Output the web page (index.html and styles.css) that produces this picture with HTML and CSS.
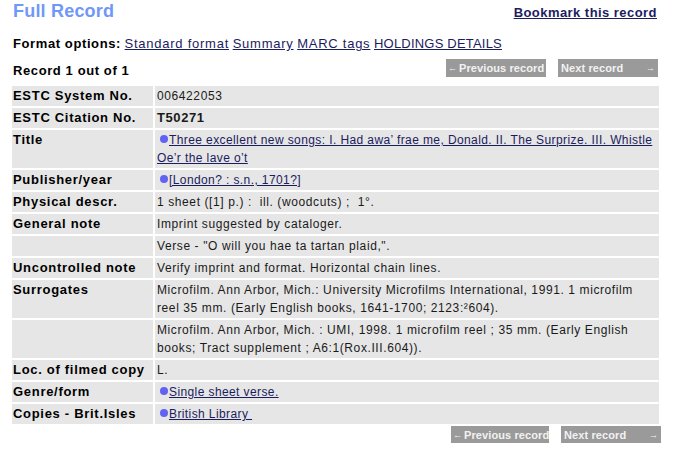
FILE: index.html
```html
<!DOCTYPE html>
<html>
<head>
<meta charset="utf-8">
<link rel="stylesheet" href="styles.css">
</head>
<body>
<div class="page">
  <div class="header">
    <h1 class="title">Full Record</h1>
    <a class="bookmark" href="#">Bookmark this record</a>
  </div>
  <div class="formats">
    <span class="formats-label">Format options:</span>
    <a href="#">Standard format</a>
    <a href="#">Summary</a>
    <a href="#">MARC tags</a>
    <a class="caps" href="#">HOLDINGS DETAILS</a>
  </div>
  <div class="navrow">
    <span class="count">Record 1 out of 1</span>
    <div class="navbtns">
      <a class="btn prev" href="#"><span class="arr">&larr;</span>Previous record</a>
      <a class="btn next" href="#">Next record<span class="arr">&rarr;</span></a>
    </div>
  </div>
  <table class="record">
    <tr><th>ESTC System No.</th><td>006422053</td></tr>
    <tr><th>ESTC Citation No.</th><td class="strong">T50271</td></tr>
    <tr><th>Title</th><td><span class="dot"></span><a href="#">Three excellent new songs: I. Had awa’ frae me, Donald. II. The Surprize. III. Whistle Oe’r the lave o’t</a></td></tr>
    <tr><th>Publisher/year</th><td><span class="dot"></span><a href="#">[London? : s.n., 1701?]</a></td></tr>
    <tr><th>Physical descr.</th><td>1 sheet ([1] p.) :&nbsp; ill. (woodcuts) ;&nbsp; 1°.</td></tr>
    <tr><th>General note</th><td>Imprint suggested by cataloger.</td></tr>
    <tr><th></th><td>Verse - "O will you hae ta tartan plaid,".</td></tr>
    <tr><th>Uncontrolled note</th><td>Verify imprint and format. Horizontal chain lines.</td></tr>
    <tr><th>Surrogates</th><td>Microfilm. Ann Arbor, Mich.: University Microfilms International, 1991. 1 microfilm reel 35 mm. (Early English books, 1641-1700; 2123:²604).</td></tr>
    <tr><th></th><td>Microfilm. Ann Arbor, Mich. : UMI, 1998. 1 microfilm reel ; 35 mm. (Early English books; Tract supplement ; A6:1(Rox.III.604)).</td></tr>
    <tr><th>Loc. of filmed copy</th><td>L.</td></tr>
    <tr><th>Genre/form</th><td><span class="dot"></span><a href="#">Single sheet verse.</a></td></tr>
    <tr><th>Copies - Brit.Isles</th><td><span class="dot"></span><a href="#">British Library&nbsp;</a></td></tr>
  </table>
  <div class="navbtns bottom">
    <a class="btn prev" href="#"><span class="arr">&larr;</span>Previous record</a>
    <a class="btn next" href="#">Next record<span class="arr">&rarr;</span></a>
  </div>
</div>
</body>
</html>
```

FILE: styles.css
```css
body {
  margin: 0;
  background: #ffffff;
  font-family: "Liberation Sans", Arial, sans-serif;
  color: #000;
}
.page {
  width: 647px;
  padding-left: 12px;
}
.header {
  display: flex;
  justify-content: space-between;
  align-items: flex-start;
  height: 34px;
}
.title {
  margin: 0;
  padding-left: 1px;
  font-size: 18px;
  line-height: 22px;
  font-weight: bold;
  color: #6f98f8;
  letter-spacing: 0.2px;
}
.bookmark {
  margin-top: 5px;
  margin-right: 2px;
  font-size: 13px;
  line-height: 16px;
  font-weight: bold;
  color: #1c1c60;
  letter-spacing: 0.45px;
}
.formats {
  padding-left: 1px;
  font-size: 13px;
  line-height: 20px;
  height: 20px;
}
.formats-label {
  font-weight: bold;
  letter-spacing: 0.6px;
}
.formats a {
  color: #1c1c60;
  font-size: 13px;
  letter-spacing: 0.75px;
}
.formats a.caps {
  letter-spacing: 0.2px;
}
.navrow {
  display: flex;
  justify-content: space-between;
  align-items: center;
  margin-top: 4px;
  height: 20px;
}
.count {
  padding-left: 1px;
  margin-top: 4px;
  font-size: 13px;
  font-weight: bold;
  letter-spacing: 0.6px;
}
.navbtns {
  display: flex;
  gap: 12px;
  margin-right: 1px;
}
.btn {
  display: flex;
  align-items: center;
  box-sizing: border-box;
  width: 100px;
  height: 18px;
  padding: 0 3px 0 2px;
  overflow: hidden;
  background: #9a9a9a;
  color: #f2f2f2;
  font-size: 11px;
  font-weight: bold;
  letter-spacing: 0.1px;
  text-decoration: none;
  white-space: nowrap;
}
.btn .arr {
  font-weight: normal;
  font-size: 9px;
  letter-spacing: 0;
}
.btn.prev {
  gap: 2px;
}
.btn.next {
  justify-content: space-between;
  padding-left: 3px;
}
.bottom {
  justify-content: flex-end;
  margin-right: -2px;
}
.bottom .btn {
  height: 17px;
}
.bottom .btn.prev {
  width: 98px;
}
.record {
  border-collapse: separate;
  border-spacing: 2px;
  margin-left: -2px;
  margin-top: 6px;
  width: 651px;
}
.record th,
.record td {
  background: #e6e6e6;
  padding: 1px 2px;
  font-size: 12px;
  line-height: 18px;
  vertical-align: top;
  text-align: left;
}
.record th {
  width: 138px;
  padding-left: 1px;
  font-size: 13px;
  font-weight: bold;
  letter-spacing: 0.7px;
}
.record td {
  color: #1a1a1a;
  letter-spacing: 0.6px;
}
.record td.strong {
  font-weight: bold;
  font-size: 13px;
  letter-spacing: 0.6px;
}
.record a {
  color: #1c1c60;
  letter-spacing: 0.4px;
}
.dot {
  display: inline-block;
  width: 8px;
  height: 8px;
  border-radius: 50%;
  background: #6262f2;
  margin-left: 3px;
  margin-right: 1px;
  vertical-align: 1px;
}
```
